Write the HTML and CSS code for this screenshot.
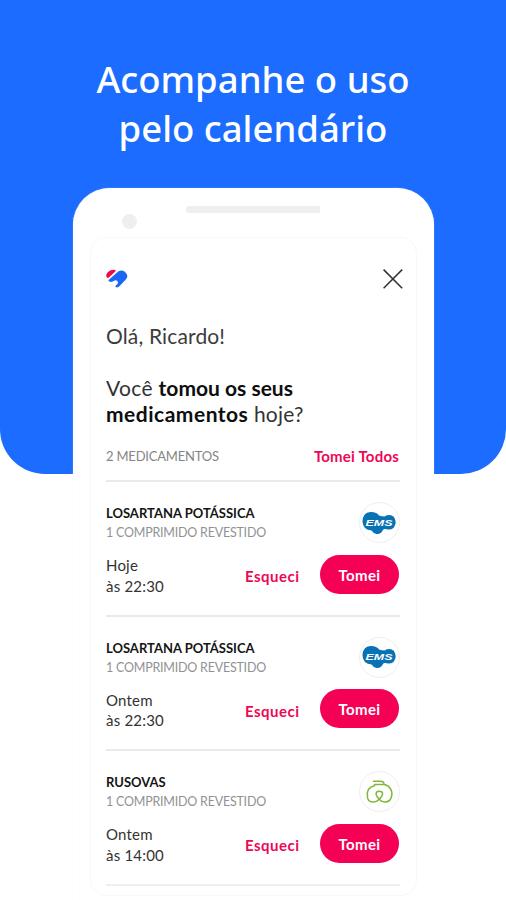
FILE: index.html
```html
<!DOCTYPE html>
<html lang="pt-BR">
<head>
<meta charset="utf-8">
<title>Acompanhe o uso pelo calendário</title>
<link rel="stylesheet" href="styles.css">
</head>
<body>
<main class="page">
  <h1 class="headline">Acompanhe o uso<br>pelo calendário</h1>
  <div class="phone">
    <div class="bezel"><span class="camera"></span><span class="speaker"></span></div>
    <section class="card">
      <header class="topbar">
        <svg class="logo" viewBox="0 0 22 19"><path d="M.4 7.6C-.5 4.5 3.6.5 7.7.8Q9.6.8 9.8 2L2.6 8.8Q.9 9.2.4 7.6Z" fill="#f10b43"/><path d="M2.3 11.2 12.5 2.2Q17.8-.3 20.8 5.2 22.2 8 19.6 10.8L13.4 17.3Q11 19.6 9.2 17.2L11.8 14.6Q12.4 11.3 9.4 11.3L6 12.8Q3.4 13.4 2.3 11.2Z" fill="#1b67f5"/></svg>
        <svg class="close" viewBox="0 0 20 20"><path d="M.6.6 19.2 19.2M19.2.6.6 19.2" stroke="#333" stroke-width="1.5" fill="none"/></svg>
      </header>
      <p class="hello">Olá, Ricardo!</p>
      <h2 class="question"><span class="ask">Você </span><b>tomou os seus</b><br><b class="meds">medicamentos</b><span class="today"> hoje?</span></h2>
      <div class="summary"><span class="count">2 MEDICAMENTOS</span><span class="all">Tomei Todos</span></div>
      <article class="dose">
        <div class="drug">
          <div><h3 class="name">LOSARTANA POTÁSSICA</h3><p class="amount">1 COMPRIMIDO REVESTIDO</p></div>
          <span class="brand"><svg viewBox="0 0 40 40"><path d="M3.5 18.5C3.5 12 7.5 9 12 9Q18 9 20 12.5Q23 13.5 25.5 13.5Q31 10.5 35 14Q38.5 20 34.5 25Q31 27.5 27 26Q24.5 25.5 24 27Q22 31.5 17.5 31Q14 30 12.5 27.5Q4 27 3.5 18.5Z" fill="#0872b5"/><text x="6.5" y="23" textLength="27" lengthAdjust="spacingAndGlyphs" class="ems">EMS</text></svg></span>
        </div>
        <div class="action"><p class="time">Hoje<br>às 22:30</p><span class="skip">Esqueci</span><span class="take">Tomei</span></div>
      </article>
      <article class="dose">
        <div class="drug">
          <div><h3 class="name">LOSARTANA POTÁSSICA</h3><p class="amount">1 COMPRIMIDO REVESTIDO</p></div>
          <span class="brand"><svg viewBox="0 0 40 40"><path d="M3.5 18.5C3.5 12 7.5 9 12 9Q18 9 20 12.5Q23 13.5 25.5 13.5Q31 10.5 35 14Q38.5 20 34.5 25Q31 27.5 27 26Q24.5 25.5 24 27Q22 31.5 17.5 31Q14 30 12.5 27.5Q4 27 3.5 18.5Z" fill="#0872b5"/><text x="6.5" y="23" textLength="27" lengthAdjust="spacingAndGlyphs" class="ems">EMS</text></svg></span>
        </div>
        <div class="action"><p class="time">Ontem<br>às 22:30</p><span class="skip">Esqueci</span><span class="take">Tomei</span></div>
      </article>
      <article class="dose">
        <div class="drug">
          <div><h3 class="name">RUSOVAS</h3><p class="amount">1 COMPRIMIDO REVESTIDO</p></div>
          <span class="brand"><svg viewBox="0 0 40 40"><path d="M14.5 9.3H21Q25.5 9.5 25 12.5H15.5M25 12.5C31 13.5 34 19 32.5 24.5C31 31.5 23.5 31 20.5 27.5C15.5 22.5 16.5 19.2 20.3 19.2C24.3 19.2 25 22.5 20 27.5C17 31 9.5 31.5 8.5 25.5C7.5 19 10 14.8 15.5 13.8" fill="none" stroke="#80b73b" stroke-width="1.5" stroke-linecap="round" stroke-linejoin="round"/></svg></span>
        </div>
        <div class="action"><p class="time">Ontem<br>às 14:00</p><span class="skip">Esqueci</span><span class="take">Tomei</span></div>
      </article>
      <div class="end"></div>
    </section>
  </div>
</main>
</body>
</html>
```
FILE: styles.css
```css
* { box-sizing: border-box; }
body { margin: 0; background: #fff; font-family: Lato, "Open Sans", sans-serif; }
h1, h2, h3, p { margin: 0; font-weight: 400; }
.page {
  position: relative; z-index: 0;
  height: 900px; overflow: hidden; padding-top: 55px;
  background: #fff;
}
.page::before {
  content: ""; position: absolute; top: 0; left: 0; z-index: -1;
  width: 100%; height: 474px; background: #1b6cff;
  border-radius: 0 0 45px 45px;
}
.headline {
  height: 133px; color: #fff; text-align: center; white-space: nowrap;
  font: 500 36.5px/49px "Noto Sans", sans-serif;
}
.phone {
  width: 361px; height: 740px; margin-left: 73px; padding: 0 17px;
  background: #fff; border-radius: 37px 37px 0 0;
  box-shadow: 0 0 1px #e6e8ee;
}
.bezel { height: 49px; display: flex; align-items: flex-start; }
.camera { width: 15px; height: 15px; margin: 26px 0 0 32px; border-radius: 50%; background: #efeff1; }
.speaker { width: 134px; height: 7px; margin: 18px 0 0 49px; border-radius: 3px 0 0 3px; background: #efeff1; }
.card {
  height: 659px; padding: 0 16px 0 15px; display: flex; flex-direction: column;
  border: 1px solid #f8f8f9; border-radius: 16px; background: #fff;
}
.topbar { height: 83px; padding-top: 31px; display: flex; justify-content: space-between; align-items: flex-start; margin-right: -3px; }
.logo { width: 22px; height: 19px; }
.close { width: 20px; height: 20px; }
.hello { height: 54px; font-size: 21px; line-height: 30px; letter-spacing: .15px; color: #3c3c3c; }
.question { height: 67px; font-size: 21px; line-height: 26px; color: #333; white-space: nowrap; }
.question b { font-weight: 700; color: #0e0e0e; }
.ask { letter-spacing: .35px; }
.question .meds { letter-spacing: .5px; }
.today { letter-spacing: .2px; }
.summary { height: 38px; display: flex; justify-content: space-between; line-height: 28px; font-size: 13px; white-space: nowrap; }
.count { color: #858585; letter-spacing: -.2px; }
.all { color: #ee0755; font-weight: 700; font-size: 15px; letter-spacing: .2px; margin-right: 1px; }
.dose { height: 134.5px; flex: none; border-top: 2px solid #e9e9ea; display: flex; flex-direction: column; }
.drug { height: 71px; padding-top: 21px; display: flex; justify-content: space-between; white-space: nowrap; }
.name { font-size: 13px; line-height: 20px; font-weight: 700; color: #151515; }
.amount { font-size: 12.5px; line-height: 19px; letter-spacing: -.22px; color: #929292; }
.brand { width: 41px; height: 41px; border: 1.5px solid #eeeef0; border-radius: 50%; overflow: hidden; margin: -1px 0; }
.brand svg { display: block; width: 40px; height: 40px; margin: -.5px 0 0 -1.5px; }
.ems { font: italic 700 9px "Liberation Sans", sans-serif; fill: #fff; }
.action { display: flex; align-items: flex-start; color: #333; }
.time { width: 139px; margin-top: 2px; font-size: 15px; line-height: 20.5px; letter-spacing: .2px; }
.skip { width: 75px; padding-top: 12px; color: #ee0755; font-size: 15px; font-weight: 700; line-height: 22px; letter-spacing: .5px; }
.take { width: 79px; height: 39px; padding-top: 1px; text-align: center; border-radius: 19.5px; color: #fff; background: #f40055; font-size: 15px; font-weight: 700; line-height: 38px; letter-spacing: .4px; margin-top: 1.5px; }
.end { height: 2px; flex: none; background: #eeeeef; }
```
